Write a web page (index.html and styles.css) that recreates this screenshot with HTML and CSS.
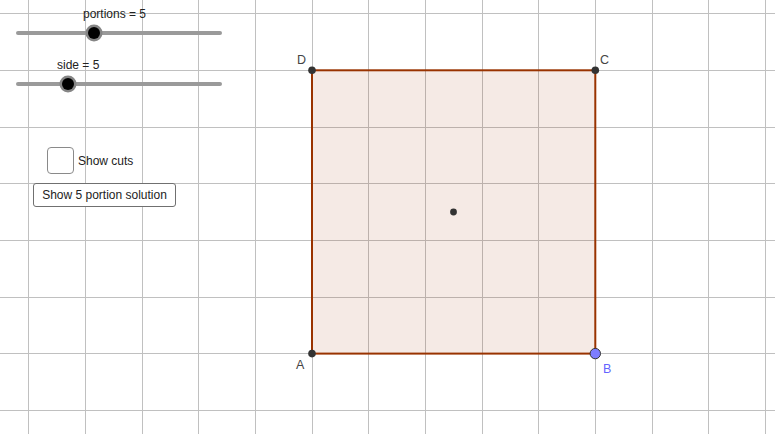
FILE: index.html
```html
<!DOCTYPE html>
<html>
<head>
<meta charset="utf-8">
<link rel="stylesheet" href="styles.css">
</head>
<body>
<div class="stage">
  <svg class="canvas" width="775" height="434" viewBox="0 0 775 434" xmlns="http://www.w3.org/2000/svg">
    <g class="grid" stroke="#c0c0c0" stroke-width="1">
      <line x1="28.5" y1="0" x2="28.5" y2="434"/>
      <line x1="85.5" y1="0" x2="85.5" y2="434"/>
      <line x1="142.5" y1="0" x2="142.5" y2="434"/>
      <line x1="198.5" y1="0" x2="198.5" y2="434"/>
      <line x1="255.5" y1="0" x2="255.5" y2="434"/>
      <line x1="312.5" y1="0" x2="312.5" y2="434"/>
      <line x1="368.5" y1="0" x2="368.5" y2="434"/>
      <line x1="425.5" y1="0" x2="425.5" y2="434"/>
      <line x1="482.5" y1="0" x2="482.5" y2="434"/>
      <line x1="538.5" y1="0" x2="538.5" y2="434"/>
      <line x1="595.5" y1="0" x2="595.5" y2="434"/>
      <line x1="652.5" y1="0" x2="652.5" y2="434"/>
      <line x1="708.5" y1="0" x2="708.5" y2="434"/>
      <line x1="765.5" y1="0" x2="765.5" y2="434"/>
      <line x1="0" y1="13.5" x2="775" y2="13.5"/>
      <line x1="0" y1="70.5" x2="775" y2="70.5"/>
      <line x1="0" y1="127.5" x2="775" y2="127.5"/>
      <line x1="0" y1="183.5" x2="775" y2="183.5"/>
      <line x1="0" y1="240.5" x2="775" y2="240.5"/>
      <line x1="0" y1="297.5" x2="775" y2="297.5"/>
      <line x1="0" y1="353.5" x2="775" y2="353.5"/>
      <line x1="0" y1="410.5" x2="775" y2="410.5"/>
    </g>
    <rect x="312" y="70.3" width="283.3" height="283.3" fill="#993300" fill-opacity="0.1" stroke="#993300" stroke-width="2"/>
    <circle cx="312" cy="70.3" r="3.8" fill="#333"/>
    <circle cx="595.3" cy="70.3" r="3.8" fill="#333"/>
    <circle cx="312" cy="353.6" r="3.8" fill="#333"/>
    <circle cx="453.5" cy="212" r="3.4" fill="#333"/>
    <circle cx="595.3" cy="353.6" r="5.2" fill="#7d7dff" stroke="#333" stroke-width="1"/>
    <g class="labels">
      <text x="297" y="64">D</text>
      <text x="600" y="64">C</text>
      <text x="296" y="369">A</text>
      <text x="603" y="373" class="blue">B</text>
    </g>
  </svg>

  <div class="slider slider-portions">
    <span class="slider-label" style="left:67px">portions = 5</span>
    <div class="slider-track"></div>
    <div class="slider-knob" style="left:78px"></div>
  </div>

  <div class="slider slider-side">
    <span class="slider-label" style="left:41px">side = 5</span>
    <div class="slider-track"></div>
    <div class="slider-knob" style="left:52px"></div>
  </div>

  <label class="check">
    <span class="check-box"></span>
    <span class="check-text">Show cuts</span>
  </label>

  <button class="btn">Show 5 portion solution</button>
</div>
</body>
</html>
```
FILE: styles.css
```css
html, body {
  margin: 0;
  padding: 0;
  background: #fff;
}
body {
  font-family: "Liberation Sans", Arial, sans-serif;
  color: #222;
}
.stage {
  position: relative;
  width: 775px;
  height: 434px;
  overflow: hidden;
}
.canvas {
  display: block;
}
.labels text {
  font-family: "Liberation Sans", Arial, sans-serif;
  font-size: 12.5px;
  fill: #444;
}
.labels text.blue {
  fill: #6464ff;
}
.slider {
  position: absolute;
  left: 16px;
  width: 206px;
  height: 40px;
}
.slider-portions { top: 7px; }
.slider-side { top: 58px; }
.slider-label {
  position: absolute;
  top: 0;
  font-size: 12px;
  line-height: 14px;
  white-space: nowrap;
  color: #222;
}
.slider-track {
  position: absolute;
  top: 24px;
  left: 0;
  right: 0;
  height: 4px;
  background: #9a9a9a;
  border-radius: 2px;
}
.slider-knob {
  position: absolute;
  top: 26px;
  width: 12px;
  height: 12px;
  margin-left: -6px;
  margin-top: -6px;
  background: #000;
  border-radius: 50%;
  box-shadow: 0 0 0 2.5px #858585;
}
.check {
  position: absolute;
  left: 47px;
  top: 147px;
  display: flex;
  align-items: center;
  gap: 4px;
}
.check-box {
  width: 25px;
  height: 25px;
  border: 1px solid #8a8a8a;
  border-radius: 4px;
  background: #fff;
}
.check-text {
  font-size: 12px;
  color: #222;
}
.btn {
  position: absolute;
  left: 33px;
  top: 183px;
  width: 143px;
  height: 24px;
  margin: 0;
  padding: 0;
  border: 1px solid #707070;
  border-radius: 3px;
  background: #fff;
  font-family: "Liberation Sans", Arial, sans-serif;
  font-size: 12px;
  color: #222;
  text-align: center;
}
```
